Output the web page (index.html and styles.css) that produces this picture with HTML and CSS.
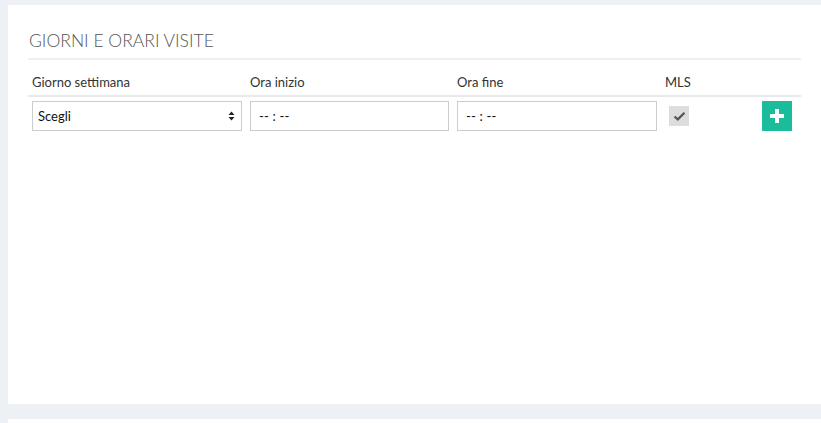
FILE: index.html
```html
<!DOCTYPE html>
<html>
<head>
<meta charset="utf-8">
<link rel="stylesheet" href="styles.css">
</head>
<body>
<div class="page">
  <section class="panel">
    <h2 class="title">GIORNI E ORARI VISITE</h2>
    <div class="table">
      <div class="head">
        <div class="th">Giorno settimana</div>
        <div class="th">Ora inizio</div>
        <div class="th">Ora fine</div>
        <div class="th">MLS</div>
        <div class="th"></div>
      </div>
      <div class="row">
        <div class="td">
          <div class="select"><span>Scegli</span>
            <svg class="arrows" width="7" height="10" viewBox="0 0 7 10"><path d="M3.5 0.5 L6.5 4 L0.5 4 Z M3.5 9.5 L6.5 6 L0.5 6 Z" fill="#222"/></svg>
          </div>
        </div>
        <div class="td"><div class="input">-- : --</div></div>
        <div class="td"><div class="input">-- : --</div></div>
        <div class="td">
          <div class="check">
            <svg width="13" height="10" viewBox="0 0 13 10"><path d="M1.5 5.5 L4.8 8.4 L11.5 1.8" fill="none" stroke="#555" stroke-width="2.2"/></svg>
          </div>
        </div>
        <div class="td end">
          <button class="add">
            <svg width="14" height="14" viewBox="0 0 14 14"><path d="M5 0h4v5h5v4H9v5H5V9H0V5h5z" fill="#fff"/></svg>
          </button>
        </div>
      </div>
    </div>
  </section>
  <section class="panel next"></section>
</div>
</body>
</html>
```
FILE: styles.css
```css
* { box-sizing: border-box; }
html, body { margin: 0; padding: 0; }
body {
  background: #edf0f5;
  font-family: Lato, "Open Sans", sans-serif;
  color: #333;
  overflow: hidden;
  height: 423px;
}
.page {
  padding: 5px 0 0 8px;
  display: flex;
  flex-direction: column;
  gap: 15px;
}
.panel {
  background: #fff;
  height: 399px;
  padding: 23px 20px 0 20px;
}
.panel.next { height: 4px; padding: 0; }
.title {
  margin: 0 0 5px 1px;
  font-weight: 300;
  font-size: 17.5px;
  line-height: 25px;
  color: #555;
}
.table {
  border-top: 2px solid #eef0f3;
}
.head, .row {
  display: grid;
  grid-template-columns: 218px 207px 208px 1fr 47px;
}
.head {
  border-bottom: 2px solid #e6e9ee;
  height: 37px;
  padding-top: 13px;
}
.th {
  font-size: 13px;
  color: #333;
  padding-left: 4px;
  line-height: 18px;
}
.row { padding-top: 4px; }
.td { padding: 0 4px; height: 30px; }
.select, .input {
  height: 30px;
  border: 1px solid #ccc;
  font-size: 13px;
  color: #111;
  display: flex;
  align-items: center;
}
.select {
  padding: 0 6px 0 5px;
  justify-content: space-between;
}
.input { padding-left: 8px; letter-spacing: 0.2px; }
.check {
  margin: 5px 0 0 4px;
  width: 20px;
  height: 20px;
  background: #ddd;
  display: flex;
  align-items: center;
  justify-content: center;
}
.td.end { display: flex; justify-content: flex-end; padding-right: 9px; }
.add {
  width: 30px;
  height: 30px;
  border: 0;
  padding: 0;
  background: #1abc9c;
  display: flex;
  align-items: center;
  justify-content: center;
}
```
